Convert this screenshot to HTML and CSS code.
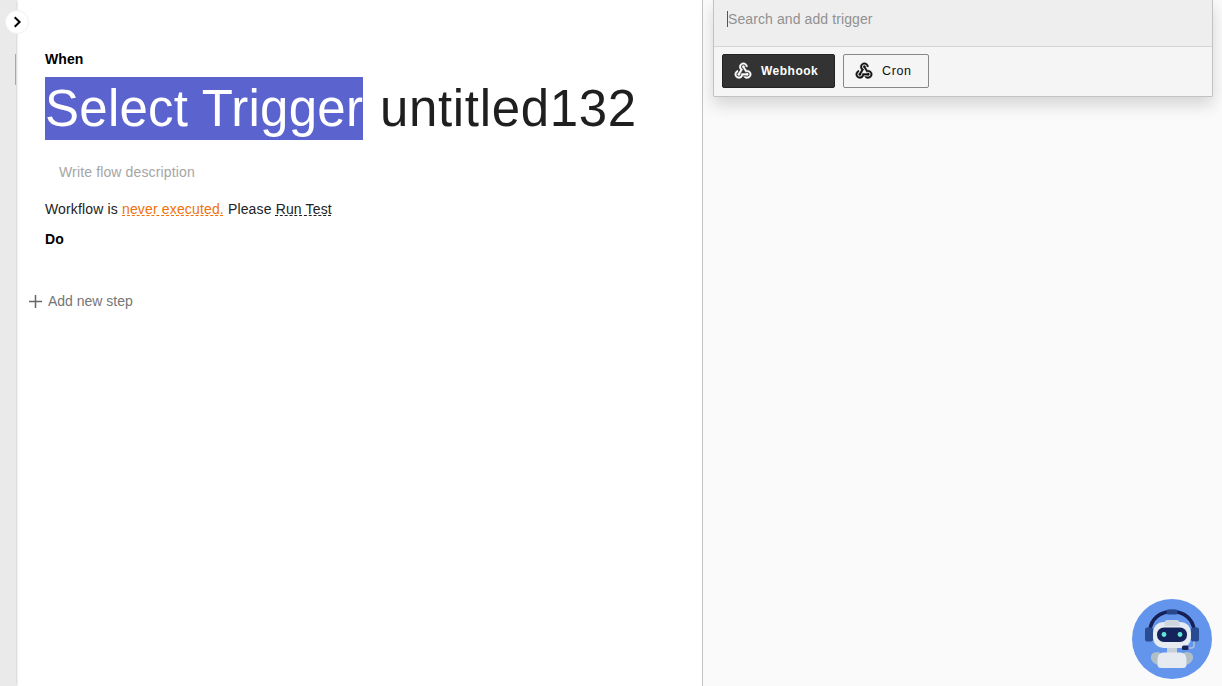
FILE: index.html
```html
<!DOCTYPE html>
<html lang="en">
<head>
<meta charset="utf-8">
<title>untitled132</title>
<link rel="stylesheet" href="styles.css">
</head>
<body>
<svg class="sprite" aria-hidden="true">
  <symbol id="webhook" viewBox="0 0 24 24"><path d="M10 15h5.88c.27-.31.67-.5 1.12-.5.83 0 1.5.67 1.5 1.5s-.67 1.5-1.5 1.5c-.44 0-.84-.19-1.12-.5H11.9c-.46 2.28-2.48 4-4.9 4-2.76 0-5-2.24-5-5 0-2.42 1.72-4.44 4-4.9v2.07c-1.16.41-2 1.53-2 2.83 0 1.65 1.35 3 3 3s3-1.35 3-3v-1zm2.500-11c1.65 0 3 1.35 3 3h2c0-2.76-2.24-5-5-5s-5 2.240-5 5c0 1.430.6 2.710 1.550 3.620l-2.350 3.900c-.68.140-1.200.750-1.200 1.480 0 .830.670 1.500 1.500 1.500s1.500-.67 1.500-1.500c0-.16-.02-.31-.07-.45l3.380-5.630C10.490 9.610 9.500 8.420 9.500 7c0-1.650 1.350-3 3-3zm4.500 9c-.64 0-1.230.2-1.720.54l-3.050-5.070C11.530 8.350 11 7.740 11 7c0-.83.67-1.500 1.500-1.500S14 6.170 14 7c0 .15-.02.29-.06.43l2.190 3.650c.28-.05.57-.08.87-.08 2.760 0 5 2.240 5 5s-2.240 5-5 5c-1.850 0-3.470-1.010-4.330-2.500h2.670c.48.32 1.050.5 1.660.5 1.650 0 3-1.350 3-3s-1.350-3-3-3z"/></symbol>
</svg>
<div class="app">
  <div class="rail">
    <span class="rail-thumb"></span>
    <button class="rail-toggle" aria-label="Open menu"><svg viewBox="0 0 24 24" width="24" height="24"><path d="M9.700 7.200 14.600 12l-4.900 4.800"/></svg></button>
  </div>
  <main class="editor">
    <div class="label">When</div>
    <h1 class="title"><span class="trigger">Select Trigger</span><span class="name">untitled132</span></h1>
    <div class="description">Write flow description</div>
    <div class="status">Workflow is <span class="never">never executed.</span> Please <span class="run">Run Test</span></div>
    <div class="label">Do</div>
    <div class="add"><svg width="13" height="13" viewBox="0 0 13 13"><path d="M6.500 0v13M0 6.500h13"/></svg><span>Add new step</span></div>
  </main>
  <aside class="side">
    <div class="panel">
      <div class="search"><span class="caret"></span>Search and add trigger</div>
      <div class="options">
        <button class="option active"><svg><use href="#webhook"/></svg><span>Webhook</span></button>
        <button class="option cron"><svg><use href="#webhook"/></svg><span>Cron</span></button>
      </div>
    </div>
    <svg class="bot" viewBox="0 0 80 80">
      <circle cx="40" cy="40" r="40" fill="#6495ed"/>
      <path d="M18 31C19 20 28 12.500 40 12.500S61 20 62 31" fill="none" stroke="#162055" stroke-width="3.600"/>
      <rect x="34.500" y="10.500" width="11" height="5" rx="1.500" fill="#27498c"/>
      <ellipse cx="26" cy="59.500" rx="7.500" ry="6" fill="#aebfc8" transform="rotate(30 26 59.500)"/>
      <ellipse cx="54" cy="59.500" rx="7.500" ry="6" fill="#aebfc8" transform="rotate(-30 54 59.500)"/>
      <rect x="35" y="46" width="10" height="9" fill="#c6d1dc"/>
      <path d="M32 53.500h16q6.500 0 6.500 7v5q0 3.500-4 3.500h-21q-4 0-4-3.500v-5q0-7 6.500-7z" fill="#e6ebf2"/>
      <rect x="21" y="23" width="38" height="26" rx="10.500" fill="#e6ebf2"/>
      <path d="M32.500 27v-3q0-3 3-3h9q3 0 3 3v3z" fill="#ced7de"/>
      <rect x="25" y="28.500" width="30" height="14.500" rx="7" fill="#15235c"/>
      <circle cx="32" cy="35.500" r="2.400" fill="#65e6d4"/><circle cx="48" cy="35.500" r="2.400" fill="#65e6d4"/>
      <rect x="13" y="28.500" width="8" height="14" rx="2" fill="#294b91"/>
      <rect x="59" y="28.500" width="8" height="14" rx="2" fill="#294b91"/>
      <path d="M62 42.500v4q0 2.500-3 2.500h-4" fill="none" stroke="#aebfd5" stroke-width="1.600"/>
      <rect x="50" y="46.500" width="6.500" height="4.500" rx="1.500" fill="#15235c"/>
    </svg>
  </aside>
</div>
</body>
</html>
```
FILE: styles.css
```css
* { box-sizing: border-box; }
body { margin: 0; overflow: hidden; font-family: "Liberation Sans", Arial, sans-serif; font-size: 14px; }
.sprite { display: none; }
.app { display: flex; width: 1222px; height: 686px; background: #fff; }
.rail { position: relative; width: 16px; background: #eaeaea; box-shadow: 0 0 3px #aaa; }
.rail-toggle { position: absolute; left: 5px; top: 10px; width: 24px; height: 24px; padding: 0; border: 1px solid #f1f0ea; border-radius: 50%; background: #fff; }
.rail-toggle svg { display: block; margin: -1px; fill: none; stroke: #000; stroke-width: 2; }
.rail-thumb { position: absolute; right: 0; top: 54px; width: 1px; height: 31px; background: #a8a8a8; }
.editor { flex: 1; padding: 51px 0 0 29px; }
.label { height: 17px; line-height: 17px; font-weight: 700; color: #000; letter-spacing: 0.1px; }
.title { display: flex; gap: 17px; margin: 9px 0 0; height: 63px; line-height: 63px; font-size: 51px; font-weight: 400; color: #1f1f1f; white-space: nowrap; }
.trigger { width: 318px; overflow: hidden; background: #5b63ce; color: #fff; letter-spacing: .25px; }
.name { letter-spacing: .65px; }
.description { margin: 23px 0 0 14px; line-height: 18px; color: #a5a5a5; letter-spacing: 0.14px; }
.status { margin-top: 19px; height: 18px; line-height: 18px; color: #222; letter-spacing: .15px; }
.never, .run { text-decoration: underline dashed 1px; text-underline-offset: 1px; }
.never { color: #f07208; }
.status + .label { margin-top: 13px; }
.add { display: flex; align-items: center; gap: 6px; margin: 44px 0 0 -16px; line-height: 18px; color: #757575; }
.add svg { display: block; }
.add path { stroke: #666; stroke-width: 1.5; }
.side { position: relative; width: 520px; background: #fafafa; border-left: 1px solid #c4c4c4; padding: 0 9px 0 10px; }
.panel { height: 97px; border: 1px solid #c2c2c2; border-top: 0; border-radius: 0 0 2px 2px; background: #f5f5f5; box-shadow: 0 8px 16px rgba(0,0,0,.15); }
.search { position: relative; height: 47px; padding: 10px 0 0 14px; line-height: 18px; background: #eee; border-bottom: 1px solid #d5d5d5; color: #919191; letter-spacing: 0.1px; }
.caret { position: absolute; left: 13px; top: 11px; width: 1px; height: 16px; background: #555; }
.options { display: flex; gap: 8px; padding: 7px 8px; }
.option { display: flex; align-items: center; gap: 8px; width: 113px; height: 34px; padding: 0 0 1px 10px; border: 1px solid #888; border-radius: 2px; background: #f5f5f5; color: #111; font: 12.5px "Liberation Sans", Arial, sans-serif; letter-spacing: .6px; }
.option svg { width: 20px; height: 20px; fill: currentColor; stroke: currentColor; stroke-width: .4; }
.option.active { background: #333; border-color: #222; color: #fff; font-size: 12px; font-weight: 700; letter-spacing: .5px; }
.option.cron { width: 86px; }
.bot { position: absolute; right: 10px; bottom: 7px; width: 80px; height: 80px; }
```
